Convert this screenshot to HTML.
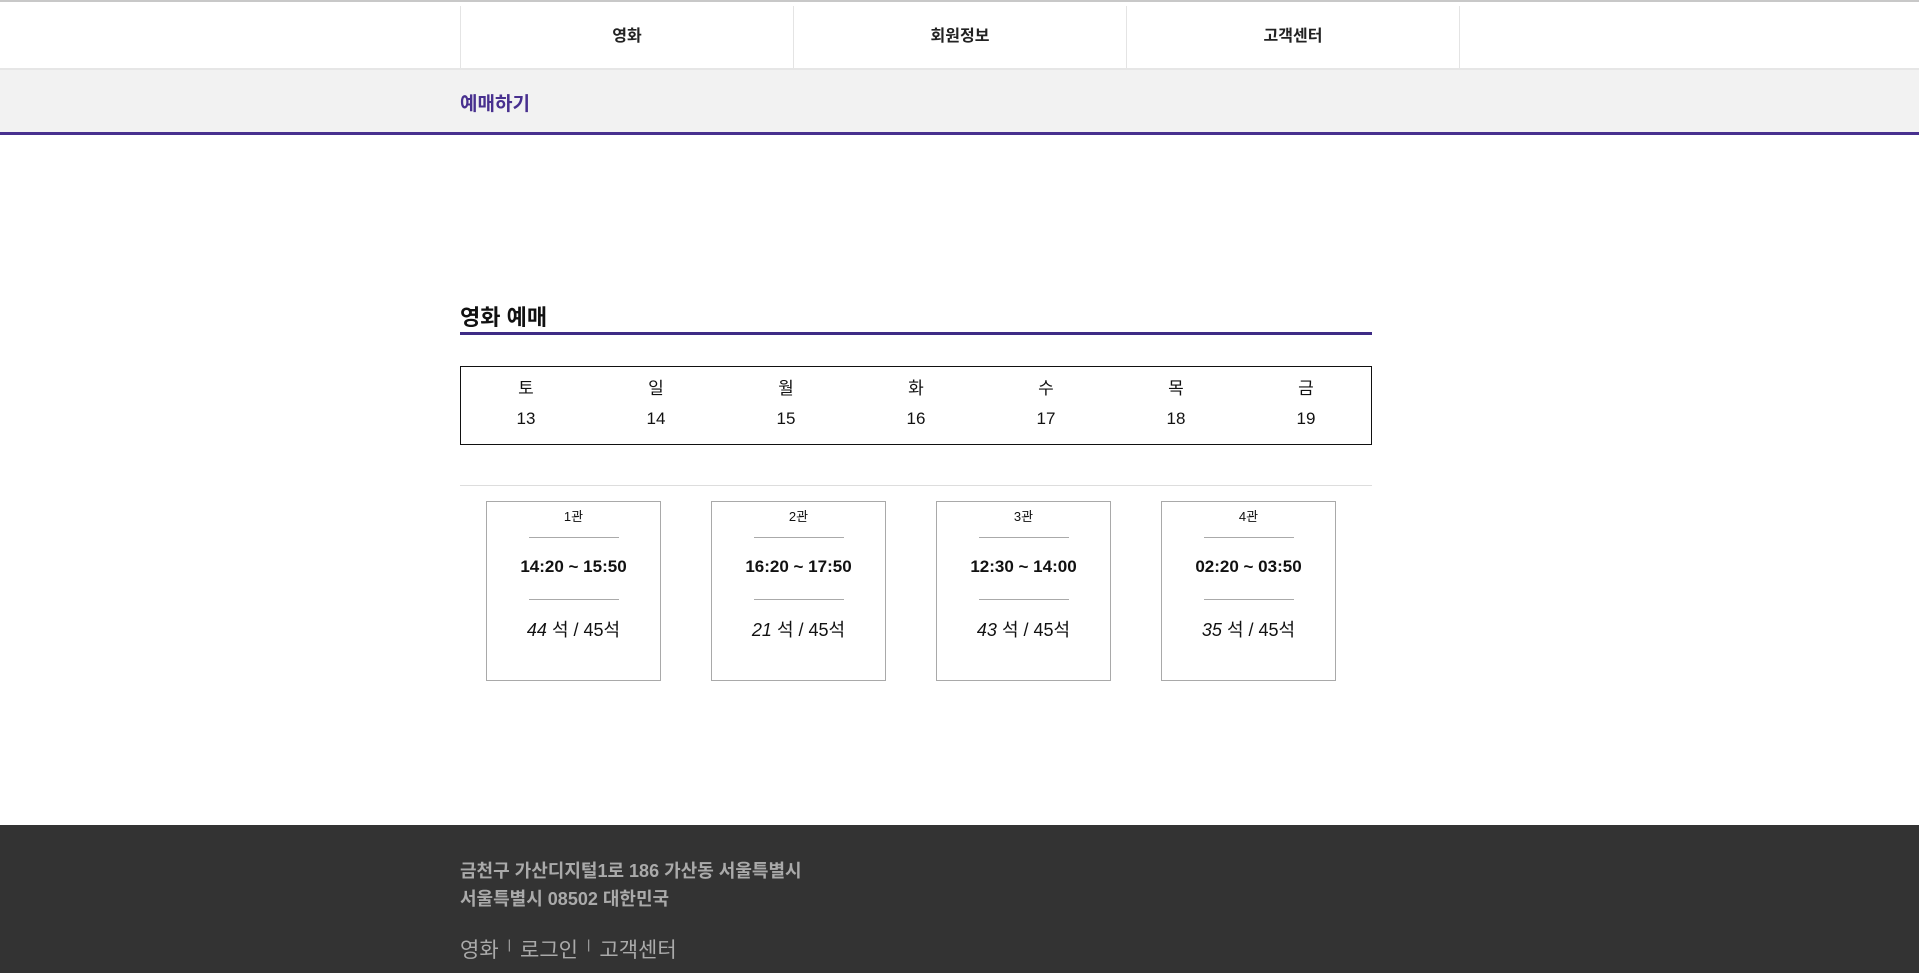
<!DOCTYPE html>
<html><head><meta charset="utf-8"><style>
*{margin:0;padding:0;box-sizing:border-box}
body{width:1919px;height:973px;overflow:hidden;background:#fff;font-family:"Liberation Sans","Noto Sans CJK KR",sans-serif;color:#111;position:relative}
.abs{position:absolute}
.top{top:0;left:0;width:1919px;height:2px;background:#c8c8c8}
.nav{top:6px;left:460px;width:1000px;height:62px;display:flex}
.nav div{flex:1;border-left:1px solid #e4e4e4;text-align:center;line-height:62px;font-size:16px;font-weight:bold;color:#222}
.nav div:last-child{border-right:1px solid #e4e4e4}
.navline{top:68px;left:0;width:1919px;height:2px;background:#e6e6e6}
.sub{top:70px;left:0;width:1919px;height:65px;background:#f2f2f2;border-bottom:3px solid #48308f}
.sub span{position:absolute;left:460px;top:19px;font-size:19px;font-weight:bold;color:#48308f}
.h{top:300px;left:460px;font-size:22px;font-weight:bold}
.hl{top:332px;left:460px;width:912px;height:3px;background:#3e2b85}
.dates{top:366px;left:460px;width:912px;height:79px;border:1px solid #111;display:flex}
.dates div{flex:1;text-align:center;font-size:17px;padding-top:7px;line-height:30px}
.sep{top:485px;left:460px;width:912px;height:1px;background:#ddd}
.card{top:501px;width:175px;height:180px;border:1px solid #a9a9a9;text-align:center}
.card .n{font-size:13px;margin-top:5px;height:20px;line-height:20px}
.card .l{width:90px;height:1px;background:#aaa;margin:0 auto}
.card .t{font-size:17px;font-weight:bold;height:61px;line-height:57px}
.card .s{font-size:18px;margin-top:16px}
.card .s i{font-style:italic}
.foot{top:825px;left:0;width:1919px;height:148px;background:#333}
.f1{top:857px;left:460px;font-size:18px;font-weight:bold;color:#aaa;line-height:28px}
.f2{top:934px;left:460px;font-size:21px;color:#aaa}
.f2 b{font-weight:normal;font-size:13px;vertical-align:8px;margin:0 9px}
</style></head><body>
<div class="abs top"></div>
<div class="abs nav"><div>영화</div><div>회원정보</div><div>고객센터</div></div>
<div class="abs navline"></div>
<div class="abs sub"><span>예매하기</span></div>
<div class="abs h">영화 예매</div>
<div class="abs hl"></div>
<div class="abs dates">
<div>토<br>13</div><div>일<br>14</div><div>월<br>15</div><div>화<br>16</div><div>수<br>17</div><div>목<br>18</div><div>금<br>19</div>
</div>
<div class="abs sep"></div>
<div class="abs card" style="left:486px"><div class="n">1관</div><div class="l" style="margin-top:10px"></div><div class="t">14:20 ~ 15:50</div><div class="l"></div><div class="s"><i>44</i> 석 / 45석</div></div>
<div class="abs card" style="left:711px"><div class="n">2관</div><div class="l" style="margin-top:10px"></div><div class="t">16:20 ~ 17:50</div><div class="l"></div><div class="s"><i>21</i> 석 / 45석</div></div>
<div class="abs card" style="left:936px"><div class="n">3관</div><div class="l" style="margin-top:10px"></div><div class="t">12:30 ~ 14:00</div><div class="l"></div><div class="s"><i>43</i> 석 / 45석</div></div>
<div class="abs card" style="left:1161px"><div class="n">4관</div><div class="l" style="margin-top:10px"></div><div class="t">02:20 ~ 03:50</div><div class="l"></div><div class="s"><i>35</i> 석 / 45석</div></div>
<div class="abs foot"></div>
<div class="abs f1">금천구 가산디지털1로 186 가산동 서울특별시<br>서울특별시 08502 대한민국</div>
<div class="abs f2">영화<b>|</b>로그인<b>|</b>고객센터</div>
</body></html>
